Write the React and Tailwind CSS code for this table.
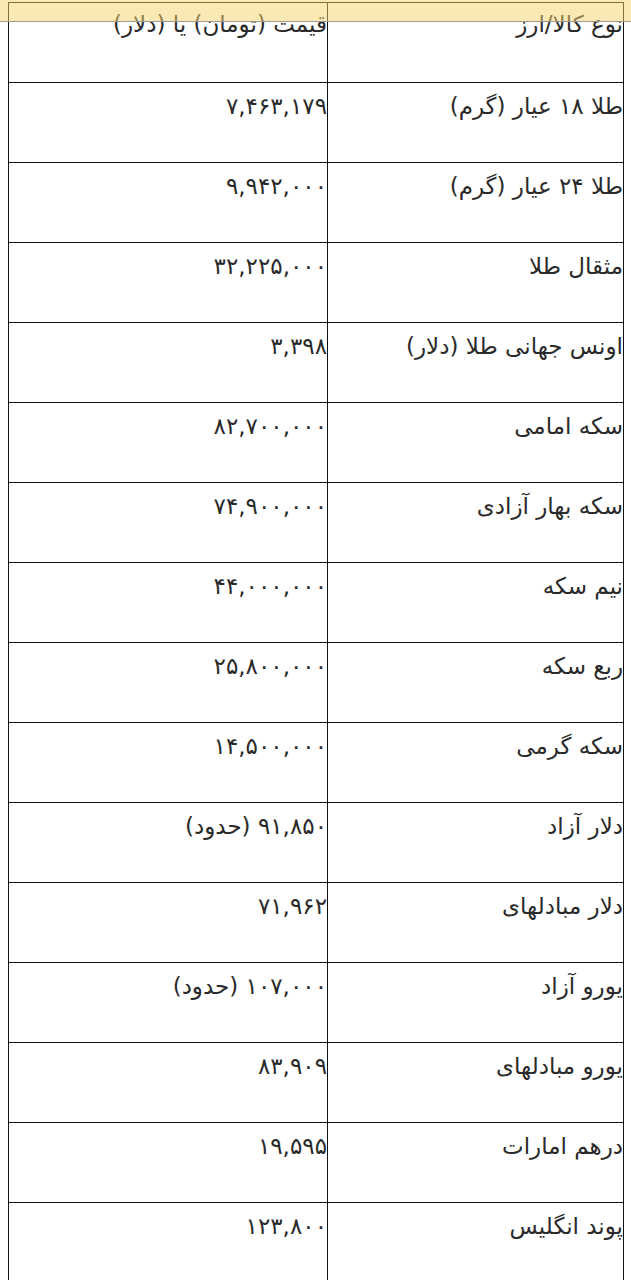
const rows = [
  ["طلا ۱۸ عیار (گرم)", "۷,۴۶۳,۱۷۹"],
  ["طلا ۲۴ عیار (گرم)", "۹,۹۴۲,۰۰۰"],
  ["مثقال طلا", "۳۲,۲۲۵,۰۰۰"],
  ["اونس جهانی طلا (دلار)", "۳,۳۹۸"],
  ["سکه امامی", "۸۲,۷۰۰,۰۰۰"],
  ["سکه بهار آزادی", "۷۴,۹۰۰,۰۰۰"],
  ["نیم سکه", "۴۴,۰۰۰,۰۰۰"],
  ["ربع سکه", "۲۵,۸۰۰,۰۰۰"],
  ["سکه گرمی", "۱۴,۵۰۰,۰۰۰"],
  ["دلار آزاد", "۹۱,۸۵۰ (حدود)"],
  ["دلار مبادلهای", "۷۱,۹۶۲"],
  ["یورو آزاد", "۱۰۷,۰۰۰ (حدود)"],
  ["یورو مبادلهای", "۸۳,۹۰۹"],
  ["درهم امارات", "۱۹,۵۹۵"],
  ["پوند انگلیس", "۱۲۳,۸۰۰"],
];

const cell =
  "h-[80px] border border-[#111] align-top text-right pr-0 leading-[28px]";

export default function App() {
  return (
    <div
      className="relative w-[631px] h-[1280px] overflow-hidden bg-white text-[#2a2a2a] font-['DejaVu_Sans',sans-serif] text-[23px]"
      dir="rtl"
    >
      <div className="pt-[2px] pl-[8px] pr-[7px]">
        <table className="w-[616px] border-collapse">
          <thead>
            <tr>
              <th className={cell + " w-[296px] pt-[7px] font-normal"}>نوع کالا/ارز</th>
              <th className={cell + " pt-[7px] font-normal"}>قیمت (تومان) یا (دلار)</th>
            </tr>
          </thead>
          <tbody>
            {rows.map(([name, price]) => (
              <tr key={name}>
                <td className={cell + " pt-[9px]"}>{name}</td>
                <td className={cell + " pt-[9px]"}>{price}</td>
              </tr>
            ))}
          </tbody>
        </table>
      </div>
      {/* top bar overlay */}
      <div className="absolute top-0 left-0 w-full h-[22px] bg-[#f5d36c]/50 border-b border-[#999]" />
    </div>
  );
}
